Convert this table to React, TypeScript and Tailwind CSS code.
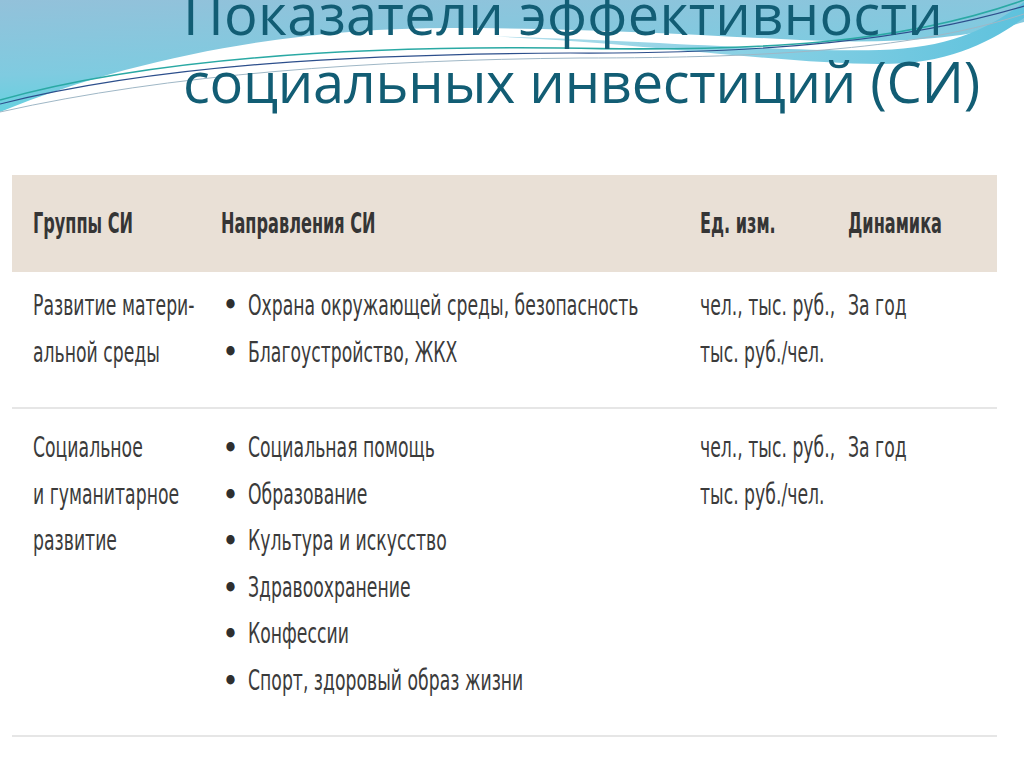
import React from "react";

const body = { fontFamily: '"DejaVu Sans Condensed", "DejaVu Sans", sans-serif' };
const title = { fontFamily: '"Open Sans", "Noto Sans", sans-serif' };

type Row = { group: string[]; items: string[]; units: string[]; dyn: string };

const rows: Row[] = [
  {
    group: ["Развитие матери-", "альной среды"],
    items: ["Охрана окружающей среды, безопасность", "Благоустройство, ЖКХ"],
    units: ["чел., тыс. руб.,", "тыс. руб./чел."],
    dyn: "За год",
  },
  {
    group: ["Социальное", "и гуманитарное", "развитие"],
    items: [
      "Социальная помощь",
      "Образование",
      "Культура и искусство",
      "Здравоохранение",
      "Конфессии",
      "Спорт, здоровый образ жизни",
    ],
    units: ["чел., тыс. руб.,", "тыс. руб./чел."],
    dyn: "За год",
  },
];

// condensed look: the reference uses a narrow face we don't have
function T({ children }: { children: React.ReactNode }) {
  return <span className="inline-block origin-left scale-x-[0.685] whitespace-nowrap">{children}</span>;
}

function H({ children }: { children: React.ReactNode }) {
  return <span className="inline-block origin-left scale-x-[0.64] whitespace-nowrap">{children}</span>;
}

function Waves() {
  return (
    <svg className="absolute left-0 top-0 w-[1024px] h-[130px]" viewBox="0 0 1024 130" preserveAspectRatio="none">
      <defs>
        <linearGradient id="sky" x1="0" y1="0" x2="0.35" y2="1">
          <stop offset="0" stopColor="#93c1da" />
          <stop offset="0.6" stopColor="#7fcbe0" />
          <stop offset="1" stopColor="#5cd3e0" />
        </linearGradient>
        <linearGradient id="band" x1="0" y1="0" x2="1" y2="0">
          <stop offset="0" stopColor="#b3deeb" />
          <stop offset="1" stopColor="#5ec2dd" />
        </linearGradient>
      </defs>
      <path d="M0,0 H1024 V22 C960,40 880,44 800,40 C680,34 580,28 450,28 C300,28 140,55 0,112 Z" fill="url(#sky)" />
      <path d="M480,36 C640,42 780,64 880,64 C950,64 990,42 1024,18 V2 C990,28 950,48 880,50 C780,52 640,40 480,36 Z" fill="url(#band)" />
      <path d="M0,100 C150,58 350,46 560,48 C760,52 900,44 1024,0" fill="none" stroke="#2aa9a4" strokeWidth="1.6" />
      <path d="M0,104 C160,64 360,54 570,53 C770,54 910,40 1024,6" fill="none" stroke="#2d4f8c" strokeWidth="1.2" />
      <path d="M0,112 C170,74 370,60 580,58 C780,58 920,48 1024,14" fill="none" stroke="#9fb7c6" strokeWidth="1" />
    </svg>
  );
}

export default function App() {
  return (
    <div className="relative w-[1024px] h-[767px] overflow-hidden bg-white">
      <Waves />
      <div className="relative mt-[-21px] pl-[183px] text-[56px] leading-[68px] text-[#125d74] whitespace-nowrap" style={title}>
        <div className="tracking-[0.3px]">Показатели эффективности</div>
        <div className="tracking-[-0.3px]">социальных инвестиций (СИ)</div>
      </div>

      <div className="relative mt-[60px] ml-[12px] w-[985px] text-[28px] text-[#3b3b3b]" style={body}>
        <div className="flex h-[97px] items-center bg-[#e9e0d6] pl-[21px] font-bold text-[#353535]">
          <div className="w-[188px]"><H>Группы СИ</H></div>
          <div className="w-[479px]"><H>Направления СИ</H></div>
          <div className="w-[148px]"><H>Ед. изм.</H></div>
          <div><H>Динамика</H></div>
        </div>

        {rows.map((r, i) => (
          <div
            key={i}
            className={
              i === 0
                ? "flex pl-[21px] pt-[10px] pb-[31px] leading-[47px] border-b-2 border-[#e6e6e6]"
                : "flex pl-[21px] pt-[16px] pb-[30px] leading-[46.6px] border-b-2 border-[#e6e6e6]"
            }
          >
            <div className="w-[188px] shrink-0">
              {r.group.map((g) => (
                <div key={g}><T>{g}</T></div>
              ))}
            </div>
            <div className="w-[479px] shrink-0">
              {r.items.map((it) => (
                <div key={it} className="flex items-center">
                  <span className="w-[27px] shrink-0 pl-[2px] text-[26px] font-bold text-[#2f2f2f]">•</span>
                  <T>{it}</T>
                </div>
              ))}
            </div>
            <div className="w-[148px] shrink-0">
              {r.units.map((u) => (
                <div key={u}><T>{u}</T></div>
              ))}
            </div>
            <div><T>{r.dyn}</T></div>
          </div>
        ))}
      </div>
    </div>
  );
}
